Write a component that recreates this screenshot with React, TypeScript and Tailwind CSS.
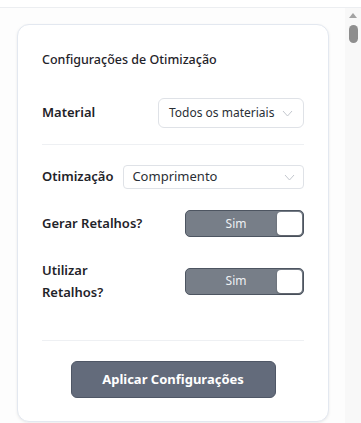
import React from "react"

// settings panel: otimização

function Chevron() {
  return (
    <svg width="11" height="7" viewBox="0 0 11 7" className="shrink-0">
      <polyline points="1,1 5.5,6 10,1" fill="none" stroke="#c3c7ce" strokeWidth="1" />
    </svg>
  )
}

function Toggle({ label }: { label: string }) {
  return (
    <div className="flex h-[27px] w-[119px] shrink-0 items-center rounded-[5px] border border-[#4d5561] bg-[#777e88] p-[1px]">
      <span className="flex-1 pl-[8px] text-center text-[12px] text-[#eef0f3]">{label}</span>
      <span className="h-full w-[25px] rounded-[4px] bg-white shadow-[0_1px_2px_rgba(0,0,0,0.25)]" />
    </div>
  )
}

export default function App() {
  return (
    <div
      className="flex h-[423px] w-[361px] flex-col overflow-hidden bg-white text-[#1f2329]"
      style={{ fontFamily: '"Noto Sans", "Open Sans", sans-serif' }}
    >
      <div className="h-[8px] shrink-0 border-b border-[#eceef1] bg-white" />
      <div className="flex min-h-0 flex-1">
        <div className="flex-1 bg-[#fdfdfd] pl-[17px] pt-[16px]">
          <div className="h-[398px] w-[312px] rounded-[12px] border border-[#e3e8f0] bg-white px-[24px] pt-[25px] shadow-[0_1px_3px_rgba(0,0,0,0.08)]">
            <div className="text-[12.5px] font-medium leading-[20px]">Configurações de Otimização</div>

            <div className="mt-[28px] flex h-[30px] items-center justify-between">
              <span className="text-[13px] font-semibold">Material</span>
              <div className="flex h-[30px] w-[146px] items-center justify-between whitespace-nowrap rounded-[6px] border border-[#dfe2e7] pl-[10px] pr-[10px] text-[12px] text-[#2a2f36]">
                <span>Todos os materiais</span>
                <Chevron />
              </div>
            </div>

            <div className="mt-[16px] h-px bg-[#eef0f3]" />

            <div className="mt-[20px] flex h-[24px] items-center gap-[10px]">
              <span className="text-[13px] font-semibold">Otimização</span>
              <div className="flex h-[24px] flex-1 items-center justify-between rounded-[4px] border border-[#dfe2e7] pl-[8px] pr-[8px] text-[13px] text-[#2a2f36]">
                <span>Comprimento</span>
                <Chevron />
              </div>
            </div>

            <div className="mt-[21px] flex h-[27px] items-center justify-between">
              <span className="text-[13px] font-semibold">Gerar Retalhos?</span>
              <Toggle label="Sim" />
            </div>

            <div className="mt-[22px] flex h-[44px] items-center justify-between">
              <span className="w-[90px] text-[13px] font-semibold leading-[22px]">Utilizar Retalhos?</span>
              <Toggle label="Sim" />
            </div>

            <div className="mt-[37px] h-px bg-[#eef0f3]" />

            <div className="mt-[20px] flex justify-center">
              <button className="h-[37px] w-[205px] rounded-[6px] border border-[#4f5766] bg-[#636b7b] text-[13px] font-bold text-white">
                Aplicar Configurações
              </button>
            </div>
          </div>
        </div>

        <div className="flex w-[16px] shrink-0 flex-col items-center bg-[#f8f8f8] pt-[5px]">
          <svg width="8" height="5" viewBox="0 0 8 5">
            <polygon points="4,0 8,5 0,5" fill="#a3a3a3" />
          </svg>
          <div className="mt-[7px] h-[18px] w-[9px] rounded-full bg-[#8e8e8e]" />
        </div>
      </div>
    </div>
  )
}
